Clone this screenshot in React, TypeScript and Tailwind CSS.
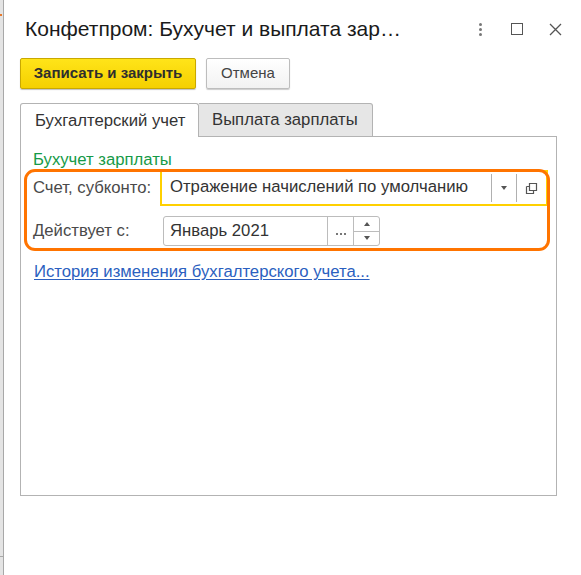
import React from 'react';

const SpinArrow = ({ up }: { up?: boolean }) => (
  <svg width="6" height="4" viewBox="0 0 6 4" className="block">
    {up ? <path d="M0 4 L3 0 L6 4 Z" fill="#555" /> : <path d="M0 0 L3 4 L6 0 Z" fill="#555" />}
  </svg>
);

const App: React.FC = () => {
  return (
    <div className="w-[581px] h-[575px] flex bg-white overflow-hidden font-['Liberation_Sans',Arial,sans-serif] text-[16.7px] text-[#333]">
      {/* Край окна позади диалога */}
      <div className="w-[3px] h-full bg-[#e4e4e4] border-r border-[#a8a8a8] box-content flex flex-col">
        <div className="mt-[14px] h-[2px] w-[2px] bg-[#e87a2c]" />
        <div className="mt-[540px] h-px w-full bg-[#a8a8a8]" />
      </div>

      <div className="flex-1 flex flex-col pl-[16px] pr-[24px]">
        {/* Заголовок */}
        <div className="h-[56px] flex items-center pt-[2px]">
          <div className="flex-1 pl-[5px] text-[21px] text-[#1a1a1a] whitespace-nowrap">
            Конфетпром: Бухучет и выплата зар…
          </div>
          <div className="flex items-center">
            <div className="flex flex-col gap-[2px] mr-[29px]">
              <span className="w-[3px] h-[3px] rounded-full bg-[#777]" />
              <span className="w-[3px] h-[3px] rounded-full bg-[#777]" />
              <span className="w-[3px] h-[3px] rounded-full bg-[#777]" />
            </div>
            <div className="w-[12px] h-[12px] border-[1.5px] border-[#555] mr-[26px]" />
            <svg width="13" height="13" viewBox="0 0 13 13" className="mr-[-5px]">
              <path d="M1 1 L12 12 M12 1 L1 12" stroke="#555" strokeWidth="1.3" />
            </svg>
          </div>
        </div>

        {/* Кнопки */}
        <div className="flex gap-[10px] pt-[2px] text-[15px]">
          <button className="h-[31px] w-[176px] rounded-[2px] border border-[#c9a800] bg-[linear-gradient(#ffe419,#f5d000)] font-bold text-[#2e2e2e] shadow-[0_1px_1px_rgba(0,0,0,0.25)]">
            Записать и закрыть
          </button>
          <button className="h-[31px] w-[84px] rounded-[2px] border border-[#bdbdbd] bg-[linear-gradient(#ffffff,#f2f2f2)] text-[#444] shadow-[0_1px_1px_rgba(0,0,0,0.2)]">
            Отмена
          </button>
        </div>

        {/* Вкладки */}
        <div className="flex mt-[14px] h-[34px] items-end">
          <div className="h-[34px] w-[179px] bg-white border border-b-0 border-[#b3b3b3] rounded-t-[3px] flex items-center pl-[14px] text-[#333] relative z-10">
            Бухгалтерский учет
          </div>
          <div className="h-[34px] w-[174px] bg-[#e6e6e6] border border-l-0 border-[#b3b3b3] rounded-tr-[3px] flex items-center pl-[13px] text-[#333]">
            Выплата зарплаты
          </div>
        </div>

        {/* Панель вкладки */}
        <div className="relative h-[360px] border border-[#b3b3b3] -mt-px pl-[12px] pr-[8px]">
          <div className="pt-[10px] h-[33px] text-[#169a47]">Бухучет зарплаты</div>

          <div className="flex items-center h-[36px]">
            <div className="w-[127px] text-[#4a4a4a]">Счет, субконто:</div>
            <div className="flex-1 h-[36px] border-2 border-[#ffd000] flex items-center bg-white">
              <div className="flex-1 pl-[8px] pb-[2px] text-[#333] whitespace-nowrap">Отражение начислений по умолчанию</div>
              <div className="w-px h-[28px] bg-[#b0b0b0]" />
              <div className="w-[24px] flex justify-center">
                <SpinArrow />
              </div>
              <div className="w-px h-[28px] bg-[#b0b0b0]" />
              <div className="w-[29px] flex justify-center">
                <svg width="13" height="13" viewBox="0 0 13 13">
                  <path d="M4.5 1.5 H11.5 V8.5 H4.5 Z" fill="none" stroke="#555" strokeWidth="1.2" />
                  <path d="M1.5 4.5 H4.5 M1.5 4.5 V11.5 H8.5 V8.5" fill="none" stroke="#555" strokeWidth="1.2" />
                </svg>
              </div>
            </div>
          </div>

          <div className="flex items-center h-[30px] mt-[10px]">
            <div className="w-[130px] text-[#4a4a4a]">Действует с:</div>
            <div className="w-[217px] h-[30px] border border-[#bcbcbc] rounded-[3px] flex items-stretch bg-white">
              <div className="flex-1 pl-[6px] flex items-center text-[#333]">Январь 2021</div>
              <div className="w-[26px] border-l border-[#bcbcbc] flex items-end justify-center gap-[2px] pb-[10px]">
                <span className="w-[2px] h-[2px] bg-[#777]" />
                <span className="w-[2px] h-[2px] bg-[#777]" />
                <span className="w-[2px] h-[2px] bg-[#777]" />
              </div>
              <div className="w-[26px] border-l border-[#bcbcbc] flex flex-col">
                <div className="flex-1 flex items-center justify-center border-b border-[#bcbcbc]">
                  <SpinArrow up />
                </div>
                <div className="flex-1 flex items-center justify-center">
                  <SpinArrow />
                </div>
              </div>
            </div>
          </div>

          <div className="mt-[13px] pl-[1px] text-[#2b5fc0] underline underline-offset-2">
            История изменения бухгалтерского учета...
          </div>

          {/* Оранжевая рамка выделения */}
          <div className="absolute left-[3px] top-[32px] w-[526px] h-[82px] border-[3px] border-[#ff7400] rounded-[11px] pointer-events-none" />
        </div>
      </div>
    </div>
  );
};

export default App;
